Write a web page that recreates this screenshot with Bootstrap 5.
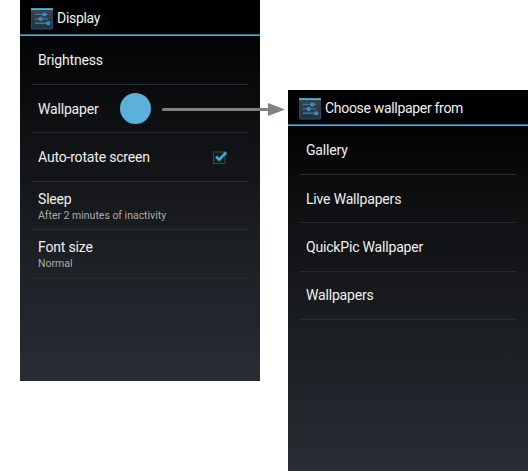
<!DOCTYPE html>
<html lang="en">
<head>
<meta charset="utf-8">
<meta name="viewport" content="width=device-width, initial-scale=1">
<title>Display settings</title>
<link href="https://cdn.jsdelivr.net/npm/bootstrap@5.3.0/dist/css/bootstrap.min.css" rel="stylesheet">
<style>
body { font-family: Roboto, "Liberation Sans", sans-serif; background: #fff; }
.stage { width: 528px; height: 471px; padding-left: 20px; gap: 28px; }
.phone { width: 240px; height: 381px; color: #f0f0f0; background: linear-gradient(#000 0, #020303 36px, #0f1113 132px, #1b1e22 240px, #282c34 381px); }
.phone-low { margin-top: 90px; }
.phone-bar { height: 36px; padding: 0 11px; gap: 4px; background: linear-gradient(#000 34px, #1c7394 34px, #1c7394 35px, #38b8e8 35px); }
.phone-bar svg { width: 22px; height: 22px; margin-top: 1px; }
.phone-bar h1 { font-size: 14px; letter-spacing: -.31px; line-height: 16px; font-weight: 400; margin-top: -1px; }
.entries { padding: .6px 12px 0; }
.entry { height: 48.4px; padding: 1px 6px 0; border-bottom: 1px solid #292c2f; font-size: 14px; letter-spacing: -.18px; line-height: 17px; }
.entry.flex-column { padding: 2.8px 6px 0; }
.entry-note { font-size: 10.5px; letter-spacing: -.01px; line-height: 14px; color: #aaa; margin-top: 1px; }
.touch-dot { width: 31px; height: 31px; left: 120px; top: 93px; background: #5bb1d9; }
.flow-arrow { left: 161px; top: 101px; }
.tick { margin-right: 13.5px; margin-top: -2px; }
</style>
<script src="https://cdn.jsdelivr.net/npm/bootstrap@5.3.0/dist/js/bootstrap.bundle.min.js"></script>
</head>
<body>
<svg width="0" height="0" class="position-absolute">
  <defs>
    <linearGradient id="face" x2="0" y2="1"><stop stop-color="#3e4347"/><stop offset="1" stop-color="#24323e"/></linearGradient>
    <linearGradient id="edge" x2="0" y2="1"><stop stop-color="#343a3e"/><stop offset="1" stop-color="#20577c"/></linearGradient>
  </defs>
  <symbol id="sliders" viewBox="0 0 22 22">
    <rect x=".5" y=".5" width="21" height="20.5" rx=".6" fill="url(#face)" stroke="url(#edge)"/>
    <path d="M0 1.1h22" stroke="#42b7e5" stroke-width="1.8"/>
    <path d="M3.7 6.4h13.6M3.7 10.9h13.6M3.7 15.3h14" stroke="#2f78ab" stroke-width="1.4"/>
    <g fill="#39749c" stroke="#4299d0" stroke-width="1.2"><circle cx="13.2" cy="6.4" r="1.4"/><circle cx="9.6" cy="10.9" r="1.4"/><circle cx="17.3" cy="15.3" r="1.4"/></g>
  </symbol>
</svg>
<main class="stage d-flex align-items-start position-relative overflow-hidden">
  <section class="phone flex-shrink-0">
    <header class="phone-bar d-flex align-items-center"><svg><use href="#sliders"/></svg><h1 class="mb-0">Display</h1></header>
    <div class="entries">
      <div class="entry d-flex align-items-center">Brightness</div>
      <div class="entry d-flex align-items-center">Wallpaper</div>
      <div class="entry d-flex align-items-center justify-content-between">Auto-rotate screen
        <svg class="tick" width="18" height="16" viewBox="0 0 18 16" role="img" aria-label="Checked"><rect x="2.5" y="3" width="11.5" height="11.5" fill="#15181b" stroke="#41464a"/><path d="M5 7.6l3.2 3L15.2 3.4" fill="none" stroke="#35a9d8" stroke-opacity=".15" stroke-width="5"/><path d="M5 7.6l3.2 3L15.2 3.4" fill="none" stroke="#35b5e8" stroke-width="2.3"/></svg>
      </div>
      <div class="entry d-flex flex-column justify-content-center"><div>Sleep</div><div class="entry-note">After 2 minutes of inactivity</div></div>
      <div class="entry d-flex flex-column justify-content-center"><div>Font size</div><div class="entry-note">Normal</div></div>
    </div>
  </section>
  <section class="phone phone-low flex-shrink-0">
    <header class="phone-bar d-flex align-items-center"><svg><use href="#sliders"/></svg><h1 class="mb-0">Choose wallpaper from</h1></header>
    <div class="entries">
      <div class="entry d-flex align-items-center">Gallery</div>
      <div class="entry d-flex align-items-center">Live Wallpapers</div>
      <div class="entry d-flex align-items-center">QuickPic Wallpaper</div>
      <div class="entry d-flex align-items-center">Wallpapers</div>
    </div>
  </section>
  <span class="touch-dot position-absolute rounded-circle"></span>
  <svg class="flow-arrow position-absolute" width="126" height="17" viewBox="0 0 126 17"><path d="M2.5 8.5H109" stroke="#808080" stroke-width="3" stroke-linecap="round"/><path d="M107 2v13l17-6.5z" fill="#808080"/></svg>
</main>
</body>
</html>
